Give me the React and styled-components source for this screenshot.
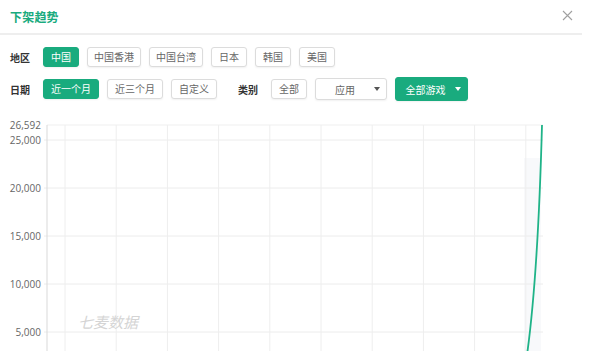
import React from 'react';
import styled, { createGlobalStyle } from 'styled-components';

const GREEN = '#19ab7e';

const Global = createGlobalStyle`
    body {
        margin: 0;
        background: #fff;
        font-family: "Noto Sans CJK SC", "Noto Sans", sans-serif;
    }
`;

const Modal = styled.div`
    width: 600px;
    height: 351px;
    overflow: hidden;
    background: #fff;
`;

const Header = styled.div`
    height: 33px;
    margin-right: 18px;
    padding-left: 10px;
    display: flex;
    align-items: center;
    justify-content: space-between;
    border-bottom: 2px solid #eeeeee;
`;

const Title = styled.h3`
    margin: 0;
    font-size: 12px;
    font-weight: 700;
    color: ${GREEN};
    letter-spacing: 0.2px;
`;

const Close = styled.span`
    width: 11px;
    height: 11px;
    margin-right: 9px;
    margin-top: -2px;
    display: flex;
`;

const Filters = styled.div`
    padding: 11px 0 0 10px;
    display: flex;
    flex-direction: column;
    gap: 10px;
`;

const Row = styled.div`
    display: flex;
    align-items: center;
    height: 22px;
`;

const Label = styled.span`
    width: 33px;
    font-size: 10px;
    font-weight: 700;
    color: #333;
    margin-left: ${props => props.$gap || 0}px;
`;

const Btn = styled.button`
    height: ${props => props.$h || 20}px;
    padding: 0 ${props => props.$pad || 7}px;
    margin-right: 8px;
    border: 1px solid ${props => (props.$active ? GREEN : '#dcdcdc')};
    border-radius: 3px;
    background: ${props => (props.$active ? GREEN : '#fff')};
    color: ${props => (props.$active ? '#fff' : '#666')};
    font-family: inherit;
    font-size: 10px;
    line-height: 1;
    box-shadow: 0 1px 2px rgba(0, 0, 0, 0.06);
    cursor: pointer;
`;

const Select = styled.div`
    width: ${props => props.$w}px;
    height: ${props => props.$h}px;
    box-sizing: border-box;
    margin-right: 8px;
    padding: 0 6px 0 0;
    display: flex;
    align-items: center;
    border: 1px solid ${props => (props.$green ? GREEN : '#dcdcdc')};
    border-radius: 3px;
    background: ${props => (props.$green ? GREEN : '#fff')};
    color: ${props => (props.$green ? '#fff' : '#666')};
    font-size: 10px;
    box-shadow: 0 1px 2px rgba(0, 0, 0, 0.06);
`;

const SelectText = styled.span`
    flex: 1;
    text-align: center;
`;

const Caret = styled.span`
    width: 0;
    height: 0;
    border-left: 3px solid transparent;
    border-right: 3px solid transparent;
    border-top: 4px solid ${props => props.$color};
`;

const ChartBox = styled.div`
    margin-top: 18px;
`;

const regions = ['中国', '中国香港', '中国台湾', '日本', '韩国', '美国'];
const dates = ['近一个月', '近三个月', '自定义'];

const yTicks = [
    { v: '25,000', y: 140 },
    { v: '20,000', y: 188 },
    { v: '15,000', y: 236 },
    { v: '10,000', y: 284 },
    { v: '5,000', y: 332 },
];

function Chart() {
    const xs = Array.from({ length: 10 }, (_, i) => 65 + i * 51.2);
    return (
        <svg width="600" height="233" viewBox="0 118 600 233" style={{ display: 'block' }}>
            <rect x="524" y="158" width="17" height="200" fill="#f8f9fb" />
            <line x1="47" y1="125" x2="543" y2="125" stroke="#efefef" />
            {yTicks.map(t => (
                <line key={t.v} x1="44" y1={t.y} x2="543" y2={t.y} stroke="#ececec" />
            ))}
            {xs.map(x => (
                <line key={x} x1={x} y1="125" x2={x} y2="351" stroke="#eeeeee" />
            ))}
            <line x1="47" y1="125" x2="47" y2="351" stroke="#d9d9d9" />
            <g fontFamily='"Open Sans", "Liberation Sans", sans-serif' fontSize="10" fill="#666" textAnchor="end">
                <text x="41" y="129">26,592</text>
                {yTicks.map(t => (
                    <text key={t.v} x="41" y={t.y + 4}>{t.v}</text>
                ))}
            </g>
            <text x="78" y="328" fontFamily='"Noto Sans CJK SC", sans-serif' fontSize="15" fill="#d4d4d4" fontStyle="italic">七麦数据</text>
            <path d="M542 125 C 540 200, 536 290, 527 355" fill="none" stroke="#1fb388" strokeWidth="1.8" />
        </svg>
    );
}

export default function App() {
    return (
        <Modal>
            <Global />
            <Header>
                <Title>下架趋势</Title>
                <Close>
                    <svg width="11" height="11" viewBox="0 0 11 11">
                        <path d="M1 1 L10 10 M10 1 L1 10" stroke="#a0a0a0" strokeWidth="1.1" />
                    </svg>
                </Close>
            </Header>
            <Filters>
                <Row>
                    <Label>地区</Label>
                    {regions.map((r, i) => (
                        <Btn key={r} $active={i === 0} $pad={r.length > 2 ? 6 : 7}>{r}</Btn>
                    ))}
                </Row>
                <Row>
                    <Label>日期</Label>
                    {dates.map((d, i) => (
                        <Btn key={d} $active={i === 0} $pad={7}>{d}</Btn>
                    ))}
                    <Label $gap={13}>类别</Label>
                    <Btn>全部</Btn>
                    <Select $w={72} $h={22}>
                        <SelectText>应用</SelectText>
                        <Caret $color="#555" />
                    </Select>
                    <Select $w={73} $h={24} $green>
                        <SelectText>全部游戏</SelectText>
                        <Caret $color="#fff" />
                    </Select>
                </Row>
            </Filters>
            <ChartBox>
                <Chart />
            </ChartBox>
        </Modal>
    );
}
